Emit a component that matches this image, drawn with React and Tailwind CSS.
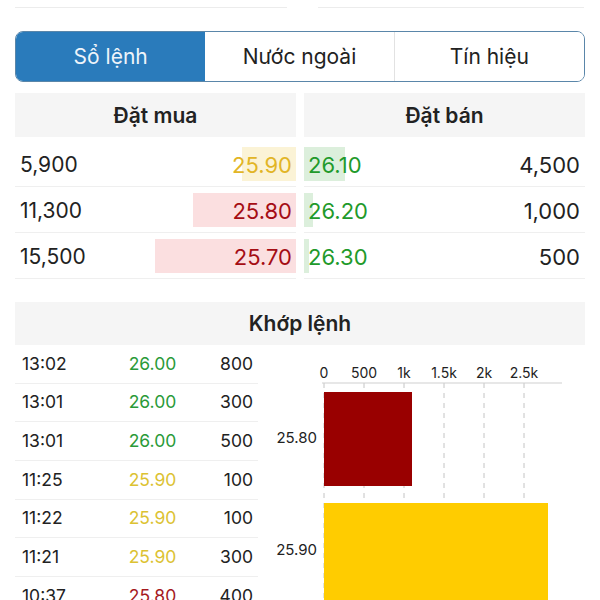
import React from "react";

const font = { fontFamily: "Inter, 'Noto Sans', sans-serif" };

const buys = [
  { vol: "5,900", v: 5900, price: "25.90", color: "text-[#e2b526]", bar: "bg-[#fbf3d6]" },
  { vol: "11,300", v: 11300, price: "25.80", color: "text-[#a50d14]", bar: "bg-[#fbdfe0]" },
  { vol: "15,500", v: 15500, price: "25.70", color: "text-[#a50d14]", bar: "bg-[#fbdfe0]" },
];
const sells = [
  { vol: "4,500", v: 4500, price: "26.10" },
  { vol: "1,000", v: 1000, price: "26.20" },
  { vol: "500", v: 500, price: "26.30" },
];

const trades = [
  ["13:02", "26.00", "800", "text-[#2a9a38]"],
  ["13:01", "26.00", "300", "text-[#2a9a38]"],
  ["13:01", "26.00", "500", "text-[#2a9a38]"],
  ["11:25", "25.90", "100", "text-[#dcc232]"],
  ["11:22", "25.90", "100", "text-[#dcc232]"],
  ["11:21", "25.90", "300", "text-[#dcc232]"],
  ["10:37", "25.80", "400", "text-[#a51a1f]"],
];

function Chart() {
  const ticks = [
    [66, "0"],
    [106, "500"],
    [146, "1k"],
    [186, "1.5k"],
    [226, "2k"],
    [266, "2.5k"],
  ];
  return (
    <svg width="327" height="255" className="block">
      {ticks.map(([x]) => (
        <line key={x} x1={x} x2={x} y1={38} y2={255} stroke="#c4c4c4" strokeWidth="1" strokeDasharray="5 5" />
      ))}
      <line x1={64} x2={304} y1={38} y2={38} stroke="#cfcfcf" strokeWidth="1" />
      {ticks.map(([x, t]) => (
        <text key={t} x={x} y={33} textAnchor="middle" fontSize="14" fill="#222" style={font}>
          {t}
        </text>
      ))}
      <rect x={66} y={47} width={88} height={94} fill="#990000" />
      <rect x={66} y={158} width={224} height={100} fill="#ffcc00" />
      <text x={59} y={98} textAnchor="end" fontSize="15" fill="#222" style={font}>25.80</text>
      <text x={59} y={210} textAnchor="end" fontSize="15" fill="#222" style={font}>25.90</text>
    </svg>
  );
}

export default function App() {
  return (
    <div className="w-[600px] h-[600px] overflow-hidden bg-white px-[15px] text-[#222]" style={font}>
      <div className="flex h-[8px]">
        <div className="w-[272px] border-b border-[#ececec]" />
        <div className="ml-[31px] w-[266px] border-b border-[#ececec]" />
      </div>

      <div className="mt-[23px] h-[51px] grid grid-cols-3 rounded-[8px] border-[1.5px] border-[#5a86a9] overflow-hidden">
        <div className="bg-[#2a7bbb] text-[#eef4fa] flex items-center justify-center text-[21px] pt-[1px]">Sổ lệnh</div>
        <div className="bg-white flex items-center justify-center text-[21px] pt-[1px] border-r border-[#e2e2e2]">Nước ngoài</div>
        <div className="bg-white flex items-center justify-center text-[21px] pt-[1px]">Tín hiệu</div>
      </div>

      <div className="mt-[11px] grid grid-cols-2 gap-2 h-[44px]">
        <div className="bg-[#f5f5f5] flex items-center justify-center text-[21px] font-semibold pt-[2px]">Đặt mua</div>
        <div className="bg-[#f5f5f5] flex items-center justify-center text-[21px] font-semibold pt-[2px]">Đặt bán</div>
      </div>

      <div className="mt-[4px]">
        {buys.map((b, i) => (
          <div key={i} className="grid grid-cols-2 gap-2 h-[46px]">
            <div className="relative flex items-center justify-between border-b border-[#efefef] text-[21px] pt-[3px]">
              <div
                className={`absolute right-0 top-[6px] bottom-[5px] ${b.bar}`}
                style={{ width: `${b.v * 0.0091}px` }}
              />
              <span className="relative pl-[5px]">{b.vol}</span>
              <span className={`relative pr-[4px] text-[22px] ${b.color}`}>{b.price}</span>
            </div>
            <div className="relative flex items-center justify-between border-b border-[#efefef] text-[21px] pt-[3px]">
              <div
                className="absolute left-0 top-[6px] bottom-[5px] bg-[#dcefdc]"
                style={{ width: `${sells[i].v * 0.0091}px` }}
              />
              <span className="relative pl-[4px] text-[22px] text-[#1f9a2b]">{sells[i].price}</span>
              <span className="relative pr-[5px] text-[22px]">{sells[i].vol}</span>
            </div>
          </div>
        ))}
      </div>

      <div className="mt-[23px] h-[43px] bg-[#f5f5f5] flex items-center justify-center text-[21px] font-semibold pt-[1px]">
        Khớp lệnh
      </div>

      <div className="flex">
        <div className="w-[243px] shrink-0">
          {trades.map(([t, p, v, c], i) => (
            <div key={i} className="h-[38.67px] grid grid-cols-[90px_95px_1fr] items-center border-b border-[#efefef] text-[17.5px]">
              <span className="pl-[7px]">{t}</span>
              <span className={`text-center ${c}`}>{p}</span>
              <span className="text-right pr-[5px]">{v}</span>
            </div>
          ))}
        </div>
        <div className="flex-1">
          <Chart />
        </div>
      </div>
    </div>
  );
}
